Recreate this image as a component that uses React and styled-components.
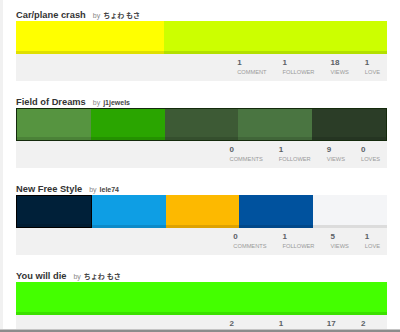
import React from 'react';
import styled, { createGlobalStyle } from 'styled-components';

const GlobalStyle = createGlobalStyle`
    html, body {
        margin: 0;
        padding: 0;
        background: #ffffff;
    }
    body {
        font-family: "Liberation Sans", Arial, "Noto Sans CJK JP", sans-serif;
    }
`;

const Page = styled.div`
    border-left: 3px solid #f1f1f1;
    padding: 8px 13px 0 13px;
    min-height: 332px;
    box-sizing: border-box;
`;

const List = styled.div`
    width: 371px;
`;

const Card = styled.div`
    margin-bottom: 14px;
`;

const TitleLine = styled.div`
    display: flex;
    align-items: baseline;
    height: 13px;
    line-height: 14px;
    white-space: nowrap;
`;

const Title = styled.span`
    font-size: 9.3px;
    font-weight: bold;
    color: #333333;
`;

const By = styled.span`
    font-size: 7px;
    color: #888888;
    margin-left: 7px;
`;

const Author = styled.span`
    font-size: 7px;
    font-weight: bold;
    color: #444444;
    margin-left: 3px;
`;

const Palette = styled.div`
    display: flex;
    height: 33px;
    box-sizing: border-box;
    border: ${props => (props.outlined ? '1px solid #142a0c' : 'none')};
`;

const Swatch = styled.div`
    flex: ${props => props.span || 1};
    background: ${props => props.color};
    box-shadow: inset 0 -3px 0 ${props => props.shade || 'rgba(0, 0, 0, 0.12)'};
    border: ${props => (props.edged ? '1px solid #000000' : 'none')};
    box-sizing: border-box;
`;

const Stats = styled.div`
    display: flex;
    justify-content: flex-end;
    height: 27px;
    box-sizing: border-box;
    padding: 4px 7px 0 0;
    background: #f1f1f1;
`;

const Stat = styled.div`
    display: flex;
    flex-direction: column;
    margin-left: 16px;
`;

const Count = styled.span`
    font-size: 8px;
    line-height: 10px;
    font-weight: bold;
    color: #5a5f66;
`;

const Label = styled.span`
    font-size: 5.7px;
    line-height: 8px;
    color: #9a9a9a;
    text-transform: uppercase;
`;

const WindowEdge = styled.div`
    position: fixed;
    left: 0;
    right: 0;
    top: 329px;
    height: 2px;
    background: #8c8c8c;
    border-top: 1px solid #c4c4c4;
`;

const palettes = [
    {
        title: 'Car/plane crash',
        author: 'ちょわ もさ',
        swatches: [
            { color: '#ffff00', span: 2 },
            { color: '#ccff00', span: 3 },
        ],
        stats: { comments: 1, followers: 1, views: 18, loves: 1 },
    },
    {
        title: 'Field of Dreams',
        author: 'j1jewels',
        outlined: true,
        swatches: [
            { color: '#569440' },
            { color: '#2aa500' },
            { color: '#3d5a35' },
            { color: '#4a7541' },
            { color: '#2b3d27' },
        ],
        stats: { comments: 0, followers: 1, views: 9, loves: 0 },
    },
    {
        title: 'New Free Style',
        author: 'lele74',
        swatches: [
            { color: '#002039', edged: true },
            { color: '#0e9ee4' },
            { color: '#fdb900' },
            { color: '#00529e' },
            { color: '#f4f5f7', shade: '#dcdcdc' },
        ],
        stats: { comments: 0, followers: 1, views: 5, loves: 1 },
    },
    {
        title: 'You will die',
        author: 'ちょわ もさ',
        swatches: [{ color: '#44ff00' }],
        stats: { comments: 2, followers: 1, views: 17, loves: 2 },
    },
];

const plural = (n, word) => (n === 1 ? word : `${word}s`);

const PaletteCard = ({ title, author, swatches, stats, outlined }) => (
    <Card>
        <TitleLine>
            <Title>{title}</Title>
            <By>by</By>
            <Author>{author}</Author>
        </TitleLine>
        <Palette outlined={outlined}>
            {swatches.map((s, i) => (
                <Swatch key={i} color={s.color} span={s.span} shade={s.shade} edged={s.edged} />
            ))}
        </Palette>
        <Stats>
            <Stat>
                <Count>{stats.comments}</Count>
                <Label>{plural(stats.comments, 'comment')}</Label>
            </Stat>
            <Stat>
                <Count>{stats.followers}</Count>
                <Label>{plural(stats.followers, 'follower')}</Label>
            </Stat>
            <Stat>
                <Count>{stats.views}</Count>
                <Label>views</Label>
            </Stat>
            <Stat>
                <Count>{stats.loves}</Count>
                <Label>{plural(stats.loves, 'love')}</Label>
            </Stat>
        </Stats>
    </Card>
);

export default function App() {
    return (
        <>
            <GlobalStyle />
            <Page>
                <List>
                    {palettes.map(p => (
                        <PaletteCard key={p.title} {...p} />
                    ))}
                </List>
            </Page>
            <WindowEdge />
        </>
    );
}
